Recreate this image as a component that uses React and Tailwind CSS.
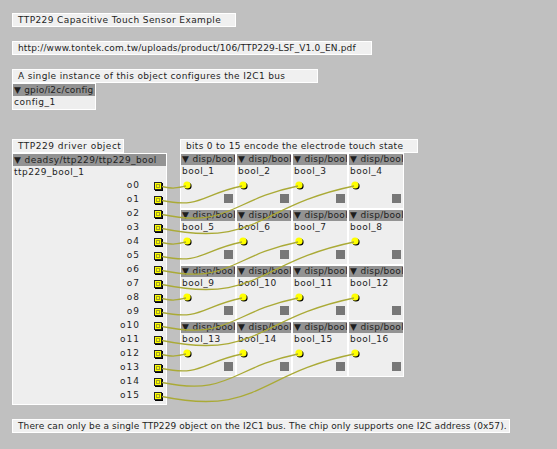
const WIRE = "#aaaa36";

function Comment({ className, children }) {
  return (
    <div
      className={`absolute h-[14px] bg-[#f0f0f0] border border-white pl-[5px] leading-[12px] whitespace-nowrap overflow-hidden ${className}`}
    >
      {children}
    </div>
  );
}

function OutPin() {
  return (
    <svg width="9" height="9" viewBox="0 0 9 9" className="block">
      <rect x="1" y="1" width="8" height="8" fill="#000" />
      <rect x="0.5" y="0.5" width="7" height="7" fill="#ffff00" stroke="#222" />
      <rect x="2.5" y="2.5" width="3" height="3" fill="none" stroke="#444" strokeDasharray="1 1" />
    </svg>
  );
}

function InPin() {
  return (
    <svg width="9" height="9" viewBox="0 0 9 9" className="block">
      <circle cx="5" cy="5" r="3.6" fill="#000" />
      <circle cx="4" cy="4" r="3.6" fill="#ffff00" />
    </svg>
  );
}

function BoolDisp({ n }) {
  return (
    <div className="w-[56px] h-[56px] border border-white bg-[#eeeeee] flex flex-col overflow-hidden">
      <div className="h-[11px] bg-[#939393] leading-[11px] whitespace-nowrap overflow-hidden pl-[1px] tracking-[0.3px]">▼ disp/bool</div>
      <div className="h-[13px] leading-[13px] pl-[1px] tracking-[0.5px]">bool_{n}</div>
      <div className="mt-[3px] ml-[2px]">
        <InPin />
      </div>
      <div className="self-end mr-[2px] mt-[4px] w-[9px] h-[9px] bg-[#777777]" />
    </div>
  );
}

function wirePath(i) {
  const x1 = 162;
  const y1 = 186.5 + 14 * i;
  const col = i % 4;
  const row = Math.floor(i / 4);
  const x2 = 186 + 56 * col;
  const y2 = 186 + 56 * row;
  const dx = x2 - x1;
  const dy = y2 - y1;
  const sag = Math.sqrt(dx * dx + dy * dy) / 10;
  const mx = (x1 + x2) / 2;
  return `M${x1} ${y1} C${mx} ${y1 + sag} ${mx} ${y2 + sag} ${x2} ${y2}`;
}

export default function App() {
  const outs = Array.from({ length: 16 }, (_, i) => i);

  return (
    <div className="relative w-[557px] h-[449px] bg-[#c0c0c0] overflow-hidden font-['DejaVu_Sans',sans-serif] text-[9px] text-[#1e1e1e]">
      <Comment className="left-[12px] top-[13px] w-[224px] tracking-[0.4px]">TTP229 Capacitive Touch Sensor Example</Comment>
      <Comment className="left-[12px] top-[41px] w-[360px] tracking-[0.15px]">
        http://www.tontek.com.tw/uploads/product/106/TTP229-LSF_V1.0_EN.pdf
      </Comment>
      <Comment className="left-[12px] top-[69px] w-[306px] tracking-[0.35px]">
        A single instance of this object configures the I2C1 bus
      </Comment>

      {/* i2c config object */}
      <div className="absolute left-[12px] top-[83px] w-[84px] h-[27px] border border-white bg-[#eeeeee] flex flex-col">
        <div className="h-[12px] bg-[#939393] leading-[12px] whitespace-nowrap pl-[1px] tracking-[0.2px]">▼ gpio/i2c/config</div>
        <div className="h-[13px] leading-[13px] pl-[1px] tracking-[0.5px]">config_1</div>
      </div>

      <Comment className="left-[12px] top-[139px] w-[112px] tracking-[0.5px]">TTP229 driver object</Comment>
      <Comment className="left-[180px] top-[139px] w-[238px] tracking-[0.3px]">bits 0 to 15 encode the electrode touch state</Comment>

      {/* ttp229 driver */}
      <div className="absolute left-[12px] top-[153px] w-[155px] h-[252px] border border-white bg-[#eeeeee] flex flex-col">
        <div className="h-[12px] bg-[#939393] leading-[12px] whitespace-nowrap pl-[1px] tracking-[0.4px]">▼ deadsy/ttp229/ttp229_bool</div>
        <div className="h-[13px] leading-[13px] pl-[1px] tracking-[0.5px]">ttp229_bool_1</div>
        {outs.map((i) => (
          <div key={i} className="h-[14px] flex items-center justify-end gap-[14px] pr-[3px]">
            <span className="tracking-[1px]">o{i}</span>
            <OutPin />
          </div>
        ))}
      </div>

      {/* display grid */}
      <div className="absolute left-[180px] top-[153px] grid grid-cols-4">
        {outs.map((i) => (
          <BoolDisp key={i} n={i + 1} />
        ))}
      </div>

      <Comment className="left-[12px] top-[419px] w-[498px] tracking-[0.1px]">
        There can only be a single TTP229 object on the I2C1 bus. The chip only supports one I2C address (0x57).
      </Comment>

      {/* wires */}
      <svg className="absolute inset-0 pointer-events-none" width="557" height="449">
        {outs.map((i) => (
          <path key={i} d={wirePath(i)} fill="none" stroke={WIRE} strokeWidth="1.3" />
        ))}
      </svg>
    </div>
  );
}
